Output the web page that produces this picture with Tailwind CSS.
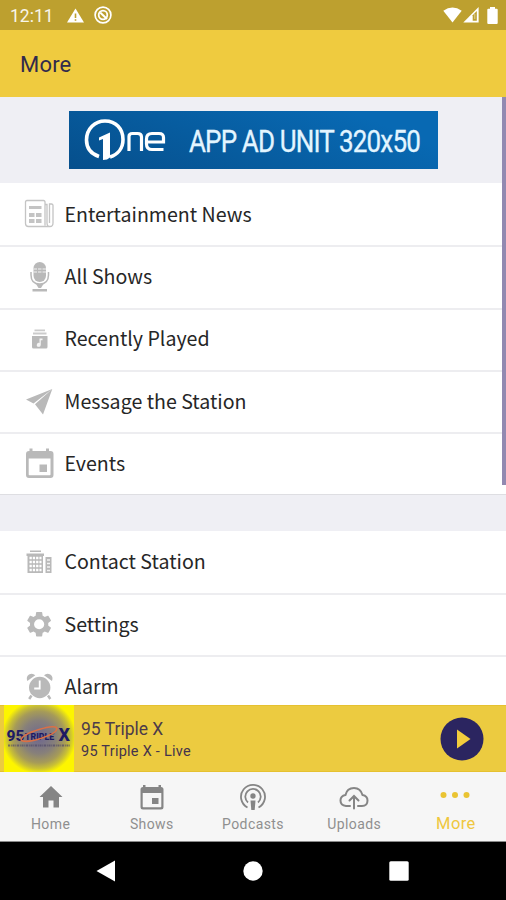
<!DOCTYPE html>
<html lang="en">
<head>
    <meta charset="UTF-8">
    <meta name="viewport" content="width=device-width, initial-scale=1.0">
    <title>95 Triple X - More</title>
    <script src="https://cdn.jsdelivr.net/npm/@tailwindcss/browser@4"></script>
</head>
<body class="bg-black font-[Roboto,sans-serif]">
    <div class="w-[506px] h-[900px] flex flex-col overflow-hidden">

        <!-- Status bar -->
        <div class="h-[30px] shrink-0 bg-[#bda02f] flex items-center justify-between pl-[10px] pr-[8px] text-white">
            <div class="flex items-center">
                <span class="w-[57px] text-[17.5px] leading-[30px] pt-[2px] text-white/90">12:11</span>
                <svg class="w-[17px] h-[15px]" viewBox="0 0 17 15"><path d="M8.5 0.5L17 14.5H0z" fill="#fff"/><path d="M8.5 5.5v4.5M8.5 11.2v1.6" stroke="#bda02f" stroke-width="1.6"/></svg>
                <svg class="ml-[10px] w-[18px] h-[18px]" viewBox="0 0 18 18" fill="none" stroke="#fff"><circle cx="9" cy="9" r="7.9" stroke-width="1.7"/><circle cx="9" cy="9" r="4.3" stroke-width="1.8"/><path d="M6.2 6.5L13 13" stroke-width="2"/></svg>
            </div>
            <div class="flex items-center">
                <svg class="w-[19px] h-[16px]" viewBox="0 0 19 16"><path d="M0.3 3.8Q9.5-3 18.7 3.8L9.5 15.5z" fill="#fff"/></svg>
                <svg class="ml-[1px] w-[16px] h-[16px]" viewBox="0 0 16 16"><path d="M0.3 15.5L15.6 0v15.5z" fill="#fff"/><path d="M9.7 8.2L13.8 4v9.8H9.7z" fill="#bda02f"/><path d="M11.8 7v5" stroke="#fff" stroke-opacity=".5" stroke-width="1"/></svg>
                <svg class="ml-[8px] w-[11px] h-[17px]" viewBox="0 0 11 17"><path d="M3 0h5v1.8h1.7q1 0 1 1V16q0 1-1 1H1.3q-1 0-1-1V2.8q0-1 1-1H3z" fill="#fff"/></svg>
            </div>
        </div>

        <!-- Header -->
        <header class="h-[67px] shrink-0 bg-[#efcb3f] flex items-center pl-[20px]">
            <h1 class="text-[22px] text-[#312a4c] tracking-[0.2px] pt-[2px]">More</h1>
        </header>

        <!-- Content -->
        <main class="relative h-[608px] shrink-0 overflow-hidden bg-[#efeff4] pt-[14px]">
            <!-- Scrollbar thumb -->
            <div class="absolute top-0 right-0 w-[4px] h-[388px] bg-[#9289b1] z-10"></div>

            <!-- Ad banner -->
            <svg class="ml-[69px] mb-[14px] block w-[369px] h-[58px]" viewBox="0 0 369 58">
                <defs>
                    <linearGradient id="ad" x1="0" y1="1" x2="1" y2="0.6">
                        <stop offset="0" stop-color="#064f8c"/>
                        <stop offset="0.5" stop-color="#075c9f"/>
                        <stop offset="1" stop-color="#0869b3"/>
                    </linearGradient>
                </defs>
                <rect width="369" height="58" fill="url(#ad)"/>
                <path d="M30 45.5C21 42.5 17.5 36 17.5 29C17.5 17.5 26 10 36 10C47 10 54 18 54 28.5C54 37 49 43.5 41 46" fill="none" stroke="#fff" stroke-width="3.6"/>
                <path d="M30 26.5L41 21.5V46.5Q38.5 49 34 49V28L30 29.5z" fill="#fff"/>
                <path d="M60 40V25.5Q60 22.5 63.5 22.5H68.5Q72.5 22.5 72.5 26V40" fill="none" stroke="#fff" stroke-width="3.2"/>
                <path d="M94.5 38.5H83Q77.5 38.5 77.5 33V28Q77.5 22.5 83 22.5H90Q94.5 22.5 94.5 26.5V31H78" fill="none" stroke="#fff" stroke-width="3.2"/>
                <text transform="translate(120 40.5) scale(0.84 1)" textLength="276" fill="#e3f5ff" stroke="#e3f5ff" stroke-width="0.3" font-family="Roboto, sans-serif" font-size="31">APP AD UNIT 320x50</text>
            </svg>

            <!-- Main menu -->
            <ul class="bg-white mb-[36px] font-['Noto_Sans_CJK_SC',sans-serif] text-[19.6px] leading-[30px] text-[#262626] fill-[#b9b9b9]">
                <li class="h-[62.2px] flex items-center pl-[24px] gap-[9.5px]">
                    <svg class="w-[31px] h-[32px]" viewBox="0 0 31 32" fill="none" stroke="#c4c4c4">
                        <path fill="none" stroke-width="1.3" d="M21 27.5V4Q21 2.5 19.5 2.5H3Q1.5 2.5 1.5 4V25.5Q1.5 28.5 4.5 28.5H26M21 6.5H23V25Q23 28.5 26 28.5Q29 28.5 29 25V7.5Q29 6 27.5 6H25.5V25"/>
                        <path fill="none" stroke-width="3" d="M5 9.5h12.5"/>
                        <path fill="none" stroke-width="4" stroke-dasharray="5.5 1.5" d="M5 17h13M5 23h13"/>
                    </svg>
                    <span class="mb-[1px]">Entertainment News</span>
                </li>
                <li class="h-[62.4px] border-t-2 border-[#ededf0] flex items-center pl-[24px] gap-[9.5px]">
                    <svg class="w-[31px] h-[32px]" viewBox="0 0 31 32">
                        <rect x="9.5" y="1" width="12.500" height="20" rx="6.250"/>
                        <path d="M9.500 8h3.500M18.500 8h3.500M9.500 11h3.500M18.500 11h3.500M14 8h3.500M14 11h3.500" stroke="#f3f3f3" stroke-width="1"/>
                        <path d="M7 11v3q0 9 8.700 9t8.800-9v-3" fill="none" stroke="#b9b9b9" stroke-width="1.500"/>
                        <path d="M12 23h7.500l-2.500 4h-2.500zM8.500 28h14.500v2.500h-14.500z"/>
                    </svg>
                    <span class="mb-[3px]">All Shows</span>
                </li>
                <li class="h-[62.4px] border-t-2 border-[#ededf0] flex items-center pl-[24px] gap-[9.5px]">
                    <svg class="w-[31px] h-[32px]" viewBox="0 0 31 32">
                        <path d="M10.500 5.500h10.500v1.700h-10.500zM9 8.500h13.500v2h-13.500z" opacity=".75"/>
                        <path d="M8 12h15.500v11q0 1.500-1.500 1.500h-12.500q-1.500 0-1.500-1.500z"/>
                        <path d="M18.500 14.500h-3v4.500a2 2 0 1 0 1.300 1.800v-4.500h1.700z" fill="#f5f5f5"/>
                    </svg>
                    <span class="mb-[4px]">Recently Played</span>
                </li>
                <li class="h-[62.4px] border-t-2 border-[#ededf0] flex items-center pl-[24px] gap-[9.5px]">
                    <svg class="w-[31px] h-[32px]" viewBox="0 0 31 32">
                        <path d="M28.300 3L2 13.500L9.500 17.500zM28.300 3L11 18.300L19 28.500z"/>
                    </svg>
                    <span class="mb-[3px]">Message the Station</span>
                </li>
                <li class="h-[62.4px] border-t-2 border-b border-t-[#ededf0] border-b-[#dedee2] flex items-center pl-[24px] gap-[9.5px]">
                    <svg class="w-[31px] h-[32px]" viewBox="0 0 31 32">
                        <path fill-rule="evenodd" d="M5.500 .5h3v2.500h13.500v-2.500h3v2.500h1.500q3 0 3 3v21q0 3-3 3h-21.500q-3 0-3-3v-21q0-3 3-3H5.500zM4.700 10.500v16q0 .8 .8 .8h20.200q.8 0 .8-.8v-16z"/>
                        <path d="M15.500 16.500h7.500v7.500h-7.500z"/>
                    </svg>
                    <span class="mb-[3px]">Events</span>
                </li>
            </ul>

            <!-- Station menu -->
            <ul class="bg-white font-['Noto_Sans_CJK_SC',sans-serif] text-[19.6px] leading-[30px] text-[#262626] fill-[#b9b9b9]">
                <li class="h-[62.2px] flex items-center pl-[24px] gap-[9.5px]">
                    <svg class="w-[31px] h-[32px]" viewBox="0 0 31 32">
                        <path d="M6 4.500h11v1.500H6zM2.500 7.500h17.500v2.500h-1v17H3.500v-17H2.500zM21.500 11h6v16h-6z"/>
                        <path d="M5.500 12h12M5.500 16h12M5.500 20h12M5.500 24h12" stroke="#fff" stroke-width="2.300" stroke-dasharray="2.300 1"/>
                        <path d="M23 14h3M23 17.500h3M23 21h3M23 24.500h3" stroke="#f4f4f4" stroke-width="1.300"/>
                    </svg>
                    <span class="mb-[2px]">Contact Station</span>
                </li>
                <li class="h-[62.4px] border-t-2 border-[#ededf0] flex items-center pl-[24px] gap-[9.5px]">
                    <svg class="w-[31px] h-[32px]" viewBox="0 0 31 32">
                        <g transform="translate(-0.100 0) scale(1.270)">
                            <path d="M19.140 12.940c.04-.3 .06-.61 .06-.94s-.02-.64-.07-.94l2.030-1.580c.18-.14 .23-.41 .12-.61l-1.920-3.320c-.12-.22-.37-.29-.59-.22l-2.390 .96c-.5-.38-1.030-.7-1.620-.94l-.36-2.540c-.04-.24-.24-.41-.48-.41h-3.840c-.24 0-.43 .17-.47 .41l-.36 2.540c-.59 .24-1.130 .57-1.620 .94l-2.390-.96c-.22-.08-.47 0-.59 .22L2.740 8.870c-.12 .21-.08 .47 .12 .61l2.030 1.580c-.05 .3-.09 .63-.09 .94s.02 .64 .07 .94l-2.030 1.580c-.18 .14-.23 .41-.12 .61l1.920 3.320c.12 .22 .37 .29 .59 .22l2.390-.96c.5 .38 1.030 .7 1.620 .94l.36 2.540c.05 .24 .24 .41 .48 .41h3.840c.24 0 .44-.17 .47-.41l.36-2.540c.59-.24 1.130-.56 1.620-.94l2.390 .96c.22 .08 .47 0 .59-.22l1.920-3.320c.12-.22 .07-.47-.12-.61zM12 16a4 4 0 1 1 0-8a4 4 0 0 1 0 8z"/>
                        </g>
                    </svg>
                    <span class="mb-[3px]">Settings</span>
                </li>
                <li class="h-[62.4px] border-t-2 border-[#ededf0] flex items-center pl-[24px] gap-[9.5px]">
                    <svg class="w-[31px] h-[32px]" viewBox="0 0 31 32">
                        <circle cx="15.700" cy="15.500" r="10.700"/>
                        <path d="M3.300 9q-1.600-4.500 1.700-6.500q3.500-2 6.300 .8zM28 9q1.600-4.500-1.700-6.500q-3.500-2-6.300 .8z"/>
                        <path d="M7.500 23.500l-2.300 3.500M24 23.500l2.300 3.500" stroke="#b9b9b9" stroke-width="2.500"/>
                        <path d="M15.700 8.500v8h-5.500" fill="none" stroke="#fff" stroke-width="1.800"/>
                    </svg>
                    <span class="mb-[4px]">Alarm</span>
                </li>
            </ul>
        </main>

        <!-- Player bar -->
        <div class="h-[67px] shrink-0 bg-[#eccb40] border-t border-b border-[#e6c130] flex items-center pl-[4px] pr-[22px]">
            <svg class="w-[70px] h-[67px] shrink-0" viewBox="0 0 70 67">
                <defs>
                    <radialGradient id="glow" gradientUnits="userSpaceOnUse" cx="35" cy="32" r="37">
                        <stop offset="0" stop-color="#6c6690"/>
                        <stop offset="0.450" stop-color="#87807a"/>
                        <stop offset="0.700" stop-color="#a69b58"/>
                        <stop offset="0.850" stop-color="#c9c035"/>
                        <stop offset="1" stop-color="#fdf500"/>
                    </radialGradient>
                </defs>
                <rect width="70" height="67" fill="#fdf500"/>
                <rect width="70" height="67" fill="url(#glow)"/>
                <g font-family="Roboto, sans-serif" font-weight="800" fill="#1d1a63">
                    <text x="2.500" y="36" font-size="15.500">95</text>
                    <text x="21" y="34.500" font-size="8.800">TRIPLE</text>
                    <text x="54.500" y="36" font-size="18">X</text>
                </g>
                <path d="M17 35.500Q17 30 35 24.500Q52 19.500 53 23.500Q53 28 38 33Q24 38 17 35.500" fill="none" stroke="#db7045" stroke-width="1.600"/>
                <path d="M4 40.500h62" stroke="#4e4768" stroke-width="2.200" stroke-dasharray="2 .8 1 .7" opacity=".65"/>
            </svg>
            <div class="grow pl-[7px] pt-[4px] text-[#4c3b4a]">
                <div class="text-[17.5px] leading-[22px]">95 Triple X</div>
                <div class="text-[14.5px] leading-[23px] tracking-[0.25px] text-[#45344c]">95 Triple X - Live</div>
            </div>
            <svg class="w-[44px] h-[44px]" viewBox="0 0 44 44"><circle cx="22" cy="22" r="21.500" fill="#2b2560"/><path d="M17 12.500L30.500 22L17 31.500z" fill="#f3cd3d"/></svg>
        </div>

        <!-- Tab bar -->
        <nav class="h-[70px] shrink-0 bg-[#f6f6f6] border-b border-[#8a8a8a] grid grid-cols-5 text-[14px] leading-[18px] tracking-[0.4px] text-[#8f8f8f]">
            <div class="flex flex-col items-center pt-[10px] gap-[3px]">
                <svg class="w-[30px] h-[30px]" viewBox="0 0 30 30" fill="#858585"><path d="M15 4L26.500 15H23V25.500H17.500V18.500H12.500V25.500H7V15H3.500z"/></svg>
                <span>Home</span>
            </div>
            <div class="flex flex-col items-center pt-[10px] gap-[3px]">
                <svg class="w-[30px] h-[30px]" viewBox="0 0 30 30" fill="#858585"><path fill-rule="evenodd" d="M6 3h2.500v2h13v-2h2.500v2q2.500 0 2.500 2.500v17.500q0 2.500-2.500 2.500h-18q-2.500 0-2.500-2.500v-17.500q0-2.500 2.500-2.500zM5.700 11v13.500q0 .7 .7 .7h17.200q.7 0 .7-.7v-13.500z"/><path d="M15 16h6.500v6h-6.500z"/></svg>
                <span>Shows</span>
            </div>
            <div class="flex flex-col items-center pt-[10px] gap-[3px]">
                <svg class="w-[30px] h-[30px]" viewBox="0 0 30 30" fill="none" stroke="#858585" stroke-width="1.800"><path d="M9.500 25.500A12 12 0 1 1 20.500 25.500M10 20.500A7.700 7.700 0 1 1 20 20.500"/><circle cx="15" cy="14" r="2.700" fill="#858585" stroke="none"/><path d="M12.500 18.500h5l-.8 9.500h-3.400z" fill="#858585" stroke="none"/></svg>
                <span>Podcasts</span>
            </div>
            <div class="flex flex-col items-center pt-[10px] gap-[3px]">
                <svg class="w-[30px] h-[30px]" viewBox="0 0 30 30" fill="none" stroke="#858585" stroke-width="2" stroke-linecap="round"><path d="M11 24H7Q1.500 23.500 1.500 18.500Q1.500 14 6.500 13Q8 6 15 6Q21.500 6 23.500 13Q28.500 14 28.500 18.500Q28.500 24 23 24H19M15 26.500V15M10.500 18.500L15 14L19.500 18.500"/></svg>
                <span>Uploads</span>
            </div>
            <div class="flex flex-col items-center pt-[8px] gap-[5px]">
                <svg class="w-[30px] h-[30px]" viewBox="0 0 30 30" fill="#eac433"><circle cx="3.500" cy="15" r="3"/><circle cx="15" cy="15" r="3"/><circle cx="26.500" cy="15" r="3"/></svg>
                <span class="pl-[1px] text-[16.5px] text-[#efc73e]">More</span>
            </div>
        </nav>

        <!-- Android navigation -->
        <div class="h-[58px] shrink-0 bg-black flex items-center justify-between pl-[96px] pr-[97px] fill-white">
            <svg class="w-[19px] h-[22px]" viewBox="0 0 19 22"><path d="M19 .5v21L.5 11z"/></svg>
            <svg class="ml-[2px] w-[20px] h-[20px]" viewBox="0 0 20 20"><circle cx="10" cy="10" r="9.700"/></svg>
            <svg class="w-[20px] h-[20px]" viewBox="0 0 20 20"><rect x=".3" y=".3" width="19.400" height="19.400" rx="1.500"/></svg>
        </div>
    </div>
</body>
</html>
